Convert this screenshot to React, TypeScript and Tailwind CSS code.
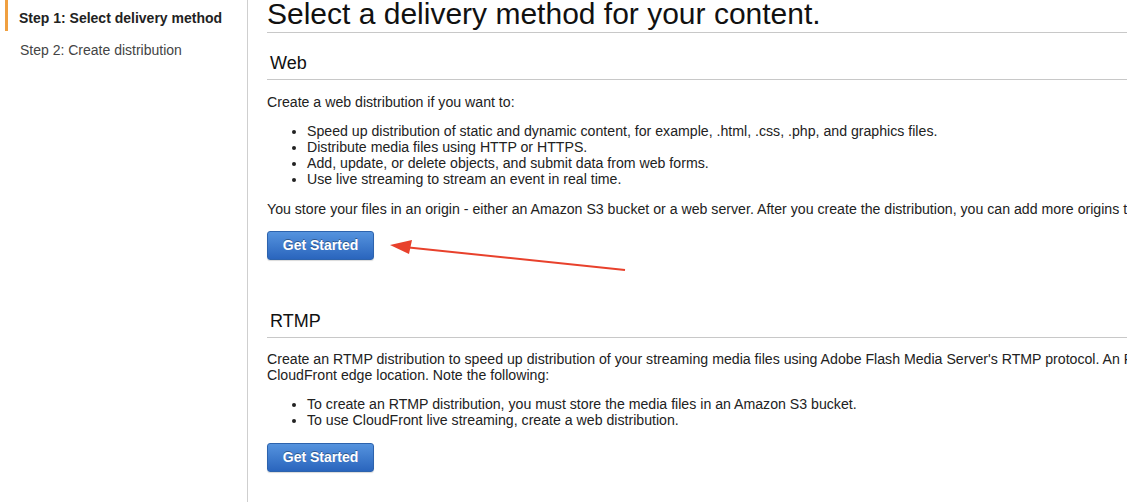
const font = "font-['Liberation_Sans',Arial,sans-serif]";

function GetStarted() {
  return (
    <button className="h-[29px] w-[107px] rounded-[3px] border border-[#2d63ad] bg-gradient-to-b from-[#5593de] to-[#2a65bd] text-[14px] font-bold text-white [text-shadow:0_-1px_0_rgba(0,0,0,0.35)] shadow-[0_1px_1px_rgba(0,0,0,0.15)]">
      Get Started
    </button>
  );
}

function Section({ title }: { title: string }) {
  return (
    <div className="mr-[-400px] border-b border-[#c8c8c8] pb-[5px] pl-[3px] text-[18px] leading-[22px] text-[#111]">
      {title}
    </div>
  );
}

export default function App() {
  return (
    <div className={`${font} flex h-[502px] w-[1127px] overflow-hidden bg-white text-[#222]`}>
      {/* Wizard steps */}
      <aside className="w-[248px] shrink-0 border-r border-[#cfcfcf] pl-[5px]">
        <div className="flex h-[31px] items-center border-l-[3px] border-[#f0a040] pl-[11px] pt-[6px] text-[14px] font-bold text-[#222]">
          Step 1: Select delivery method
        </div>
        <div className="mt-[9px] pl-[15px] text-[14px] text-[#444]">Step 2: Create distribution</div>
      </aside>

      {/* Main content */}
      <main className="min-w-0 flex-1 pl-[19px] text-[14.15px]">
        <h1 className="mr-[-400px] border-b border-[#c8c8c8] pb-[5px] text-[30px] leading-[27px] text-[#111]">
          Select a delivery method for your content.
        </h1>

        <div className="mt-[19px]">
          <Section title="Web" />
        </div>
        <p className="mt-[14px] leading-[16px]">Create a web distribution if you want to:</p>
        <ul className="mt-[13px] list-disc pl-[40px] leading-[16px]">
          <li className="whitespace-nowrap">
            Speed up distribution of static and dynamic content, for example, .html, .css, .php, and graphics files.
          </li>
          <li>Distribute media files using HTTP or HTTPS.</li>
          <li>Add, update, or delete objects, and submit data from web forms.</li>
          <li>Use live streaming to stream an event in real time.</li>
        </ul>
        <p className="mt-[14px] whitespace-nowrap leading-[16px]">
          You store your files in an origin - either an Amazon S3 bucket or a web server. After you create the distribution, you can add more origins to the distribution.
        </p>
        <div className="relative mt-[14px]">
          <GetStarted />
          <svg className="absolute left-[115px] top-[8px]" width="250" height="40" viewBox="0 0 250 40">
            <line x1="243" y1="31" x2="22" y2="8" stroke="#e8412c" strokeWidth="2" />
            <polygon points="8,6 30,1 27,15" fill="#e8412c" />
          </svg>
        </div>

        <div className="mt-[50px]">
          <Section title="RTMP" />
        </div>
        <p className="mt-[13px] whitespace-nowrap leading-[16px]">
          Create an RTMP distribution to speed up distribution of your streaming media files using Adobe Flash Media Server's RTMP protocol. An RTMP distribution allows an end user to begin playing a media file before the file has finished downloading from a
          <br />
          CloudFront edge location. Note the following:
        </p>
        <ul className="mt-[13px] list-disc pl-[40px] leading-[16px]">
          <li>To create an RTMP distribution, you must store the media files in an Amazon S3 bucket.</li>
          <li>To use CloudFront live streaming, create a web distribution.</li>
        </ul>
        <div className="mt-[15px]">
          <GetStarted />
        </div>
      </main>
    </div>
  );
}
